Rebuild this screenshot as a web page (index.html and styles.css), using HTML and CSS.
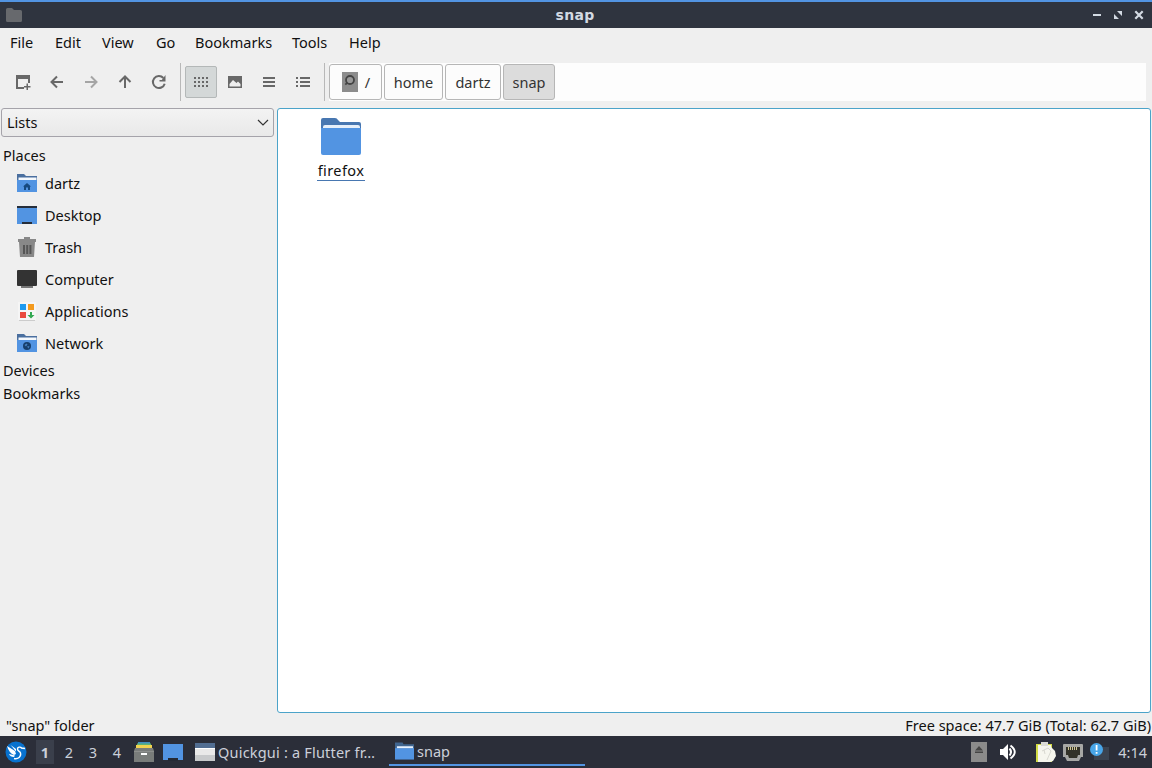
FILE: index.html
```
<!DOCTYPE html>
<html lang="en">
<head>
  <meta charset="UTF-8" />
  <title>snap</title>
  <link rel="stylesheet" href="styles.css">
</head>
<body>
  <header class="titlebar">
    <svg class="app-icon" width="16" height="14" viewBox="0 0 16 14"><path fill="#67696d" d="M0 1.5Q0 0 1.5 0H6l2 2h6.500Q16 2 16 3.500v9q0 1.500-1.500 1.500h-13Q0 14 0 12.500z"/></svg>
    <h1>snap</h1>
    <div class="window-buttons">
      <svg width="10" height="10" viewBox="0 0 10 10"><path fill="#d3dae3" d="M1 4h8v2H1z"/></svg>
      <svg width="10" height="10" viewBox="0 0 10 10"><path fill="#d3dae3" d="M4 1h5v5zM1 4v5h5z"/></svg>
      <svg width="10" height="10" viewBox="0 0 10 10"><path stroke="#d3dae3" stroke-width="2.200" d="M1.300 1.300l7.400 7.400M8.700 1.300L1.300 8.700"/></svg>
    </div>
  </header>

  <nav class="menubar">
    <span class="m-file">File</span>
    <span class="m-edit">Edit</span>
    <span class="m-view">View</span>
    <span class="m-go">Go</span>
    <span class="m-bookmarks">Bookmarks</span>
    <span class="m-tools">Tools</span>
    <span class="m-help">Help</span>
  </nav>

  <div class="toolbar">
    <div class="tool-group">
      <button><svg width="16" height="16" viewBox="0 0 16 16"><path fill="#686868" d="M1 1h14v8h-2V5H3v8h6v2H1zM11.500 9.500H13V12h2.500v1.500H13V16h-1.500v-2.500H9V12h2.500z"/></svg></button>
      <button><svg width="16" height="16" viewBox="0 0 16 16"><path fill="none" stroke="#686868" stroke-width="2" d="M8 2.500L2.500 8 8 13.500M3 8h11"/></svg></button>
      <button><svg width="16" height="16" viewBox="0 0 16 16"><path fill="none" stroke="#a5a5a5" stroke-width="2" d="M8 2.500L13.500 8 8 13.500M13 8H2"/></svg></button>
      <button><svg width="16" height="16" viewBox="0 0 16 16"><path fill="none" stroke="#686868" stroke-width="2" d="M2.500 8L8 2.500 13.500 8M8 3v11"/></svg></button>
      <button><svg width="16" height="16" viewBox="0 0 16 16"><path fill="none" stroke="#686868" stroke-width="2" d="M12.400 4A6 6 0 1 0 13.700 9.700"/><path fill="#686868" d="M14.500 1v6.500H8.500V6h2.300z"/></svg></button>
    </div>
    <div class="tool-group views">
      <button class="active"><svg width="16" height="12" viewBox="0 0 16 12"><path stroke="#686868" stroke-width="2" stroke-dasharray="2 2" d="M1 2h14M1 6h14M1 10h14"/></svg></button>
      <button><svg width="16" height="16" viewBox="0 0 16 16"><path fill="#686868" fill-rule="evenodd" d="M1 2h14v12H1zm1.500 10.500h11V10L11 7.500 9.500 9 6 6l-3.500 4z"/></svg></button>
      <button><svg width="16" height="16" viewBox="0 0 16 16"><path fill="#686868" d="M2 3h12v2H2zM2 7h12v2H2zM2 11h12v2H2z"/></svg></button>
      <button><svg width="16" height="16" viewBox="0 0 16 16"><path fill="#686868" d="M1 3h2v2H1zM1 7h2v2H1zM1 11h2v2H1zM5 3h10v2H5zM5 7h10v2H5zM5 11h10v2H5z"/></svg></button>
    </div>
    <div class="pathbar">
      <button class="p-root"><svg width="16" height="20" viewBox="0 0 16 20"><path fill="#8c8c8c" d="M0 0h16v20H0z"/><circle cx="8" cy="8" r="4" fill="#999" stroke="#444" stroke-width="1.800"/><path stroke="#444" stroke-width="1.800" d="M3.300 12.700l2-2"/></svg>/</button>
      <button class="p-home">home</button>
      <button class="p-user">dartz</button>
      <button class="p-snap current">snap</button>
    </div>
  </div>

  <main class="content">
    <aside class="sidebar">
      <div class="combo">
        <span>Lists</span>
        <svg width="12" height="8" viewBox="0 0 12 8"><path fill="none" stroke="#333" stroke-width="1.200" d="M1 1l5 5 5-5"/></svg>
      </div>
      <div class="section">Places</div>
      <ul class="places">
        <li><svg width="20" height="20" viewBox="0 0 20 20"><path fill="#4a6f9f" d="M0 1h7l2 2h11v5H0z"/><path fill="#f4f8fc" d="M1.500 4.500h18V8h-18z"/><path fill="#5294e2" d="M0 7h20v12H0z"/><path fill="#16497f" d="M10 10l4 3.500h-1V17h-2v-2.500H9V17H7v-3.500H6z"/></svg><span>dartz</span></li>
        <li><svg width="20" height="20" viewBox="0 0 20 20"><path fill="#5294e2" d="M0 1h20v18H0z"/><path fill="#262e3a" d="M0 1h20v2H0zM5 17h10v2H5z"/></svg><span>Desktop</span></li>
        <li><svg width="20" height="20" viewBox="0 0 20 20"><path fill="#888" d="M1 2h6V0h6v2h6v3H1zM2 5h16l-1 15H3z"/><path fill="#555" d="M6 8h2v9H6zM9.200 8h2v9h-2zM12.400 8h2v9h-2z"/></svg><span>Trash</span></li>
        <li><svg width="20" height="20" viewBox="0 0 20 20"><rect y="1" width="20" height="16" rx="1" fill="#333"/><path fill="#777" d="M4 17h12v2H4z"/></svg><span>Computer</span></li>
        <li><svg width="20" height="20" viewBox="0 0 20 20"><path fill="#f5f5f5" d="M1 1h18v18H1z"/><path fill="#ccc" d="M2 19h16v1H2z"/><path fill="#1e9af0" d="M3 3h6v6H3z"/><path fill="#f39a1e" d="M11 3h6v6h-6z"/><path fill="#e94a3f" d="M3 11h6v6H3z"/><path fill="#32a852" d="M13 11h2v3h2.500L14 17.500 10.500 14H13z"/></svg><span>Applications</span></li>
        <li><svg width="20" height="20" viewBox="0 0 20 20"><path fill="#4a6f9f" d="M0 1h7l2 2h11v5H0z"/><path fill="#f4f8fc" d="M1.500 4.500h18V8h-18z"/><path fill="#5294e2" d="M0 7h20v12H0z"/><circle cx="10" cy="13" r="4" fill="#173f6b"/><path fill="#4580bf" d="M7.500 12l2-1.500 1 1-1.500 2zM10 13.500l2.500-.500-1 2.500z"/></svg><span>Network</span></li>
      </ul>
      <div class="section">Devices</div>
      <div class="section">Bookmarks</div>
    </aside>
    <section class="files">
      <div class="file">
        <svg width="40" height="37" viewBox="0 0 40 37"><path fill="#4877b1" d="M0 2q0-2 2-2h12q2 0 3 2l2 2h19q2 0 2 2v8H0z"/><path fill="#e6effa" d="M2 9q0-2 2-2h33q2 0 2 2v4H2z"/><path fill="#5294e2" d="M0 10h40v25q0 2-2 2H2q-2 0-2-2z"/></svg>
        <span>firefox</span>
      </div>
    </section>
  </main>

  <footer class="statusbar">
    <span class="s-name">"snap" folder</span>
    <span class="s-space">Free space: 47.7 GiB (Total: 62.7 GiB)</span>
  </footer>

  <div class="taskbar">
    <svg class="start" width="22" height="22" viewBox="0 0 22 22"><circle cx="11" cy="11" r="10.500" fill="#0872cf"/><path fill="#fff" d="M2 5l8 5 1 3-2 1Q4 12 2 5zM5.500 4L11 8v2.500zM4 13l6 1.500-1 1.500q-4 0-5-3z"/><path fill="none" stroke="#fff" stroke-width="1.400" d="M9 17.500c4 1 7.500-2 6.500-5.500-.800-2-3-2-3-4 0-2 3-2.500 4-1l3.500.500"/></svg>
    <div class="desktops">
      <span class="on">1</span><span>2</span><span>3</span><span>4</span>
    </div>
    <svg class="cabinet" width="20" height="20" viewBox="0 0 20 20"><path fill="#3f8fc0" d="M4 0h12v3H4z"/><path fill="#5eb277" d="M3 1.500h14V4H3z"/><path fill="#f1d34f" d="M2 3h16v4H2z"/><path fill="#797c7a" d="M1 6h18l1 3v11H0V9z"/><path fill="#8d8f8d" d="M0 9h20v1H0z"/><path fill="#fff" d="M7 11h6v2H7z"/></svg>
    <svg class="show-desktop" width="20" height="17" viewBox="0 0 20 17"><path fill="#5294e2" d="M0 0h20v16H0z"/><path fill="#252a35" d="M5 14h10v3H5z"/></svg>
    <div class="task quickgui"><svg width="20" height="18" viewBox="0 0 20 18"><path fill="#e9e9e9" d="M0 0h20v18H0z"/><path fill="#526e92" d="M0 0h20v5H0z"/><path fill="#fff" d="M0 5h20v1H0z"/><path fill="#c8cacc" d="M0 12h20v6H0z"/></svg><span>Quickgui : a Flutter fr…</span></div>
    <div class="task snap"><svg width="19" height="18" viewBox="0 0 20 18"><path fill="#40658f" d="M0 0h8l1 2h11v6H0z"/><path fill="#5294e2" d="M0 6h20v12H0z"/><path fill="#e7f2ff" d="M2 4h17v2H2z"/></svg><span>snap</span></div>
    <div class="tray">
      <svg class="eject" width="16" height="20" viewBox="0 0 16 20"><path fill="#8b8b8b" d="M0 0h16v20H0z"/><path fill="#454545" d="M8 4l4 4.500H4zM4 9.500h8V11H4z"/></svg>
      <svg class="volume" width="17" height="16" viewBox="0 0 17 16"><path fill="#fff" d="M0 5h3l5-5v16l-5-5H0z"/><path fill="none" stroke="#fff" stroke-width="2" d="M9.500 4.500q3 3.500 0 7M10.500 1.500q8.500 6.500 0 13"/></svg>
      <svg class="clipboard" width="20" height="21" viewBox="0 0 20 21"><path fill="#d3dc45" d="M0 2h16v18H0z"/><path fill="#f6f6ee" d="M2 3h13v2l4 4 1 5-3 5-3 1H2z"/><path fill="#dcdcd6" d="M5 0h7v4H5z"/><path fill="none" stroke="#cfcfc8" stroke-width=".8" d="M6 9l6-3 3 3-4 9M8 8l1 4"/></svg>
      <svg class="ethernet" width="20" height="17" viewBox="0 0 20 17"><path fill="#a7a7a5" d="M0 1q0-1 1-1h18q1 0 1 1v12h-2l-2 4H4l-2-4H0z"/><path fill="#333229" d="M3 3h14v8h-2l-1 3H6l-1-3H3z"/><path stroke="#d1c795" d="M5.500 3v3M7.500 3v3M9.500 3v3M11.500 3v3M13.500 3v3"/></svg>
      <svg class="notify" width="20" height="18" viewBox="0 0 20 18"><rect x="4" y="4" width="15" height="13" fill="#3b4350"/><circle cx="6.500" cy="6.500" r="6.500" fill="#48a5e8"/><path fill="#fff" d="M5.700 2h1.800v5.500H5.700zM5.700 9h1.800v1.800H5.700z"/></svg>
      <span class="clock">4:14</span>
    </div>
  </div>
</body>
</html>
```
FILE: styles.css
```
* { box-sizing: border-box; }
body { margin: 0; width: 1152px; height: 768px; overflow: hidden; display: flex; flex-direction: column; background: #efefef; color: #111; font: 14.5px/20px "Noto Sans", sans-serif; }
svg { display: block; flex-shrink: 0; }
button { font: inherit; color: inherit; padding: 0; border: 0; background: none; display: flex; align-items: center; justify-content: center; }
span { white-space: nowrap; }

.titlebar { height: 28px; border-top: 2px solid #5294e2; background: #2f343f; display: grid; grid-template-columns: 1fr auto 1fr; align-items: center; padding: 0 8px 0 6px; }
.titlebar h1 { margin: 0; font: bold 14px/24px "DejaVu Sans", sans-serif; letter-spacing: 0.3px; color: #d3dae3; }
.window-buttons { display: flex; justify-content: flex-end; gap: 11px; }

.menubar { height: 32px; display: flex; padding: 4px 0 0 10px; }
.m-file { width: 45px; }
.m-edit { width: 47px; }
.m-view { width: 54px; }
.m-go { width: 39px; }
.m-bookmarks { width: 97px; }
.m-tools { width: 57px; }

.toolbar { height: 48px; display: flex; padding-top: 3px; }
.tool-group { height: 38px; display: flex; gap: 2px; align-items: center; padding-left: 7px; width: 181px; border-right: 1px solid #b8b8b8; }
.tool-group.views { width: 144px; padding-left: 4px; }
.tool-group button { width: 32px; height: 32px; border-radius: 2px; }
.tool-group .active { background: #d4d8d8; border: 1px solid #b4b8b8; }
.pathbar { margin-left: 4px; width: 817px; height: 38px; background: #fdfdfd; display: flex; gap: 2px; align-items: center; }
.pathbar button { height: 36px; border: 1px solid #b6b6b6; border-radius: 3px; background: #fcfcfc; color: #333; }
.p-root { width: 53px; gap: 7px; }
.p-root svg { margin: -1px 0 0 1px; }
.p-home { width: 59px; }
.p-user { width: 56px; }
.p-snap { width: 52px; }
.pathbar .current { background: #dcdcdc; }

.content { height: 605px; display: flex; }
.sidebar { width: 277px; padding-left: 1px; }
.combo { width: 273px; height: 29px; border: 1px solid #a5a3aa; border-radius: 3px; background: linear-gradient(#f3f3f3, #e9e9e9); display: flex; align-items: center; justify-content: space-between; padding: 0 4px 0 5px; margin-bottom: 7px; }
.combo span { margin-top: -2px; }
.section { height: 23px; line-height: 22px; padding-left: 2px; }
.places { list-style: none; margin: 0; padding: 0; }
.places li { height: 32px; display: flex; align-items: center; gap: 8px; padding-left: 16px; }
.files { width: 874px; border: 1px solid #4ba3c9; border-radius: 3px; background: #fff; padding: 9px 0 0 39px; }
.file { width: 48px; display: flex; flex-direction: column; align-items: center; }
.file svg { margin-right: 1px; }
.file span { margin-top: 4px; width: 48px; height: 22px; line-height: 22px; text-align: center; letter-spacing: 0.4px; border-bottom: 1px solid #4877b1; }

.statusbar { height: 23px; display: flex; justify-content: space-between; padding: 2px 1px 0 6px; }

.taskbar { height: 32px; background: #2b2e39; color: #cbd0d9; display: flex; align-items: center; padding-left: 5px; }
.desktops { display: flex; margin-left: 6px; }
.desktops span { width: 24px; height: 24px; line-height: 24px; text-align: center; }
.desktops .on { width: 18px; margin: 0 3px; background: #3a3f4b; font-weight: bold; }
.cabinet { margin-left: 5px; }
.show-desktop { margin-left: 9px; }
.task { height: 32px; display: flex; align-items: center; gap: 3px; }
.quickgui { width: 194px; margin-left: 12px; letter-spacing: 0.2px; }
.snap { width: 196px; height: 28px; margin-bottom: 0; border-bottom: 2px solid #5294e2; padding-left: 6px; }
.tray { margin-left: auto; display: flex; align-items: center; padding-right: 5px; }
.volume { margin-left: 13px; }
.clipboard { margin-left: 19px; }
.ethernet { margin-left: 7px; }
.notify { margin-left: 7px; }
.clock { margin-left: 8px; }
```
